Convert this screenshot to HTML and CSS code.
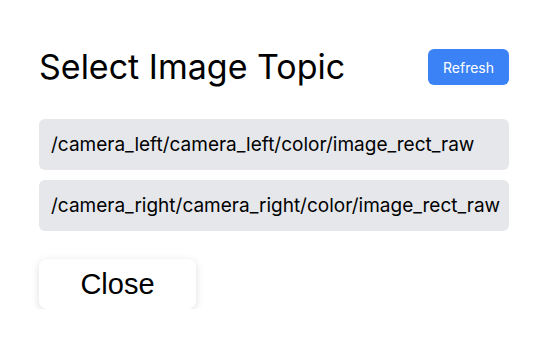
FILE: index.html
```html
<!DOCTYPE html>
<html>
<head>
<meta charset="utf-8">
<link rel="stylesheet" href="styles.css">
</head>
<body>
<div class="modal">
  <div class="header">
    <h1 class="title">Select Image Topic</h1>
    <button class="refresh">Refresh</button>
  </div>
  <div class="list">
    <div class="item">/camera_left/camera_left/color/image_rect_raw</div>
    <div class="item">/camera_right/camera_right/color/image_rect_raw</div>
  </div>
  <button class="close">Close</button>
</div>
</body>
</html>
```
FILE: styles.css
```css
html, body {
  margin: 0;
  padding: 0;
  background: #ffffff;
}
.modal {
  width: 552px;
  box-sizing: border-box;
  padding: 47px 43px 0 39px;
  font-family: Inter, "Noto Sans", sans-serif;
  color: #000;
}
.header {
  display: flex;
  justify-content: space-between;
  align-items: center;
  height: 40px;
}
.title {
  margin: 0;
  font-size: 34px;
  font-weight: 400;
  line-height: 40px;
}
.refresh {
  height: 36px;
  width: 81px;
  border: none;
  border-radius: 6px;
  background: #3b82f6;
  color: #ffffff;
  font-family: Inter, "Noto Sans", sans-serif;
  font-size: 14px;
  padding: 0;
}
.list {
  margin-top: 32px;
  display: flex;
  flex-direction: column;
  gap: 10px;
}
.item {
  height: 51px;
  box-sizing: border-box;
  display: flex;
  align-items: center;
  padding: 0 12px;
  background: #e5e7eb;
  border-radius: 6px;
  font-size: 19px;
}
.close {
  margin-top: 28px;
  width: 157px;
  height: 50px;
  border: none;
  border-radius: 8px;
  background: #ffffff;
  box-shadow: 0 2px 8px rgba(0, 0, 0, 0.13);
  font-family: "Liberation Sans", Arial, sans-serif;
  font-size: 29px;
  color: #000;
  padding: 0;
}
```
